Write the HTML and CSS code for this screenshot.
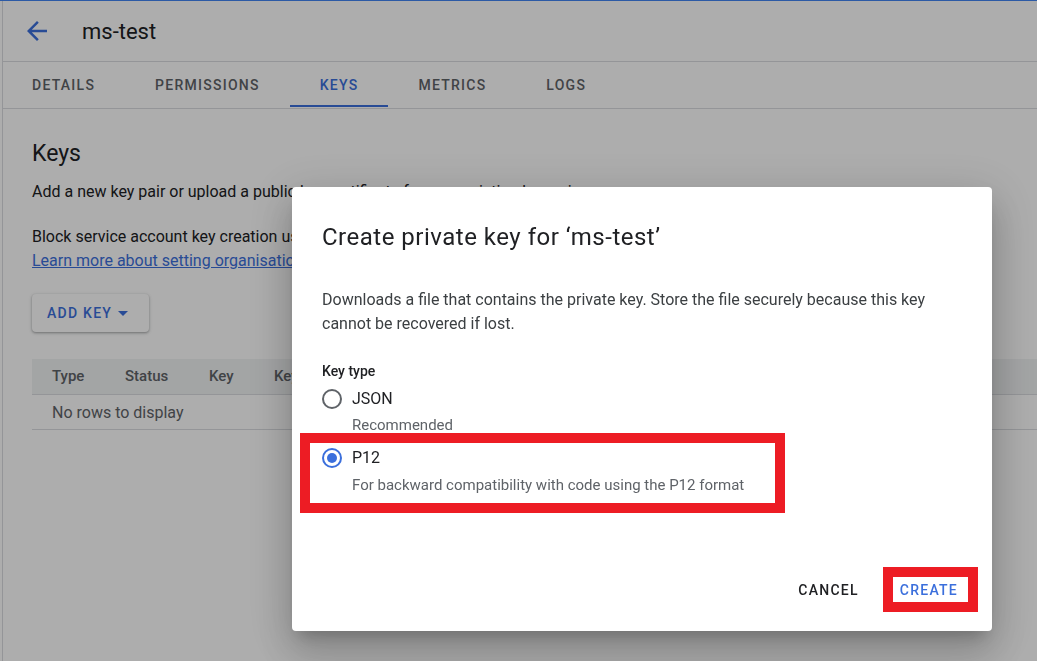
FILE: index.html
```html
<!DOCTYPE html>
<html lang="en">
<head>
    <meta charset="UTF-8">
    <meta name="viewport" content="width=device-width, initial-scale=1.0">
    <title>ms-test - Keys</title>
    <link rel="stylesheet" href="styles.css">
</head>
<body>
    <div class="page">
        <header class="topbar">
            <a class="back" href="#" aria-label="Back">
                <svg viewBox="0 0 24 24" width="30" height="30"><path d="M20 11H7.83l5.59-5.59L12 4l-8 8 8 8 1.41-1.41L7.83 13H20v-2z"/></svg>
            </a>
            <h1>ms-test</h1>
        </header>

        <nav class="tabs">
            <a class="tab" href="#">Details</a>
            <a class="tab" href="#">Permissions</a>
            <a class="tab active" href="#">Keys</a>
            <a class="tab" href="#">Metrics</a>
            <a class="tab" href="#">Logs</a>
        </nav>

        <main class="content">
            <h2>Keys</h2>
            <p class="intro">Add a new key pair or upload a public key certificate from an existing key pair.</p>
            <p class="policy">
                Block service account key creation using organisation policies.<br>
                <a href="#">Learn more about setting organisation policies for service accounts</a>
            </p>

            <button class="add-key">Add key <span class="caret"></span></button>

            <table class="keys-table">
                <colgroup>
                    <col class="col-type">
                    <col class="col-status">
                    <col class="col-key">
                    <col class="col-created">
                    <col>
                </colgroup>
                <thead>
                    <tr>
                        <th>Type</th>
                        <th>Status</th>
                        <th>Key</th>
                        <th>Key creation date</th>
                        <th>Key expiration date</th>
                    </tr>
                </thead>
                <tbody>
                    <tr>
                        <td colspan="5">No rows to display</td>
                    </tr>
                </tbody>
            </table>
        </main>
    </div>

    <div class="scrim">
        <div class="dialog">
            <h3>Create private key for ‘ms-test’</h3>
            <p class="dialog-text">Downloads a file that contains the private key. Store the file securely because this key cannot be recovered if lost.</p>

            <div class="field-label">Key type</div>

            <label class="choice">
                <span class="radio"></span>
                <span class="choice-label">JSON</span>
                <span class="choice-hint">Recommended</span>
            </label>

            <label class="choice checked marked">
                <span class="radio"></span>
                <span class="choice-label">P12</span>
                <span class="choice-hint">For backward compatibility with code using the P12 format</span>
            </label>

            <div class="actions">
                <button class="btn">Cancel</button>
                <button class="btn primary marked">Create</button>
            </div>
        </div>
    </div>
</body>
</html>
```

FILE: styles.css
```css
* {
    box-sizing: border-box;
}

body {
    margin: 0;
    font-family: Roboto, "Noto Sans", Arial, sans-serif;
    font-size: 16px;
    color: #202124;
    background-color: #fff;
    border-top: 1px solid #4285f4;
    overflow: hidden;
}

.page {
    height: 660px;
    margin-left: 2px;
    border-left: 1px solid #dadce0;
}

/* header */
.topbar {
    display: flex;
    align-items: center;
    height: 61px;
    padding-left: 19px;
    border-bottom: 1px solid #dadce0;
}

.back svg {
    display: block;
    fill: #3b6fdc;
}

.topbar h1 {
    margin: 0 0 0 30px;
    font-size: 22px;
    font-weight: 400;
}

/* tabs */
.tabs {
    display: flex;
    height: 47px;
    margin-left: -1px;
    border-bottom: 1px solid #dadce0;
}

.tab {
    position: relative;
    display: flex;
    align-items: center;
    padding: 0 30px;
    color: #5f6368;
    font-size: 14px;
    font-weight: 500;
    letter-spacing: 1.25px;
    text-decoration: none;
    text-transform: uppercase;
}

.tab.active {
    color: #3b6fdc;
}

.tab.active::after {
    content: "";
    position: absolute;
    left: 0;
    right: 0;
    bottom: 1px;
    height: 2px;
    background-color: #3b6fdc;
}

/* page content */
.content {
    padding-left: 29px;
}

.content h2 {
    margin: 31px 0 0;
    font-size: 23px;
    font-weight: 400;
    line-height: 28px;
}

.intro {
    margin: 12px 0 0;
    line-height: 24px;
    white-space: nowrap;
}

.policy {
    margin: 21px 0 0;
    line-height: 24px;
}

.policy a {
    color: #3b6fdc;
}

.add-key {
    display: flex;
    align-items: center;
    height: 38px;
    margin-top: 21px;
    padding: 0 21px 0 15px;
    border: 0;
    border-radius: 4px;
    background-color: #fff;
    box-shadow: 0 1px 2px rgba(60, 64, 67, 0.3), 0 1px 3px 1px rgba(60, 64, 67, 0.15);
    color: #3b6fdc;
    font-family: inherit;
    font-size: 14px;
    font-weight: 500;
    letter-spacing: 1.25px;
    text-transform: uppercase;
}

.caret {
    margin-left: 6px;
    border-left: 5px solid transparent;
    border-right: 5px solid transparent;
    border-top: 5px solid #3b6fdc;
}

.keys-table {
    width: 100%;
    margin-top: 27px;
    border-collapse: collapse;
}

.col-type { width: 93px; }
.col-status { width: 84px; }
.col-key { width: 65px; }
.col-created { width: 230px; }

.keys-table th {
    height: 35px;
    padding: 0;
    background-color: #f1f3f4;
    color: #5f6368;
    font-size: 15px;
    font-weight: 500;
    text-align: left;
    white-space: nowrap;
}

.keys-table th:first-child,
.keys-table td {
    padding-left: 20px;
}

.keys-table tr {
    border-bottom: 1px solid #dadce0;
}

.keys-table td {
    height: 35px;
    padding-top: 2px;
    color: #5f6368;
}

/* dialog */
.scrim {
    position: fixed;
    inset: 0;
    background-color: rgba(0, 0, 0, 0.32);
}

.dialog {
    position: absolute;
    left: 292px;
    top: 187px;
    width: 700px;
    height: 444px;
    display: flex;
    flex-direction: column;
    padding: 36px 14px 19px 30px;
    border-radius: 4px;
    background-color: #fff;
    box-shadow: 0 11px 15px -7px rgba(0, 0, 0, 0.2), 0 24px 38px 3px rgba(0, 0, 0, 0.14), 0 9px 46px 8px rgba(0, 0, 0, 0.12);
}

.dialog h3 {
    margin: 0;
    font-size: 24px;
    font-weight: 400;
    letter-spacing: 0.5px;
    line-height: 28px;
}

.dialog-text {
    max-width: 630px;
    margin: 37px 0 0;
    color: #3c4043;
    line-height: 24px;
}

.field-label {
    margin-top: 25px;
    font-size: 14px;
    font-weight: 500;
    line-height: 20px;
}

.choice {
    display: grid;
    grid-template-columns: 20px auto;
    column-gap: 10px;
    align-items: center;
    margin-top: 6px;
}

.radio {
    width: 20px;
    height: 20px;
    border: 2px solid #5f6368;
    border-radius: 50%;
    display: flex;
    align-items: center;
    justify-content: center;
}

.choice.checked .radio {
    border-color: #3b6fdc;
}

.choice.checked .radio::after {
    content: "";
    width: 10px;
    height: 10px;
    border-radius: 50%;
    background-color: #3b6fdc;
}

.choice-label {
    line-height: 24px;
}

.choice-hint {
    grid-column: 2;
    margin-top: 4px;
    color: #5f6368;
    font-size: 15px;
    line-height: 20px;
}

.choice.marked {
    width: 485px;
    margin: -2px 0 0 -22px;
    padding: 3px 0 8px 12px;
    border: 10px solid #ed1c24;
}

.choice.marked .choice-hint {
    margin-top: 5px;
}

.actions {
    display: flex;
    justify-content: flex-end;
    align-items: center;
    gap: 16px;
    margin-top: auto;
}

.btn {
    height: 36px;
    padding: 0 8px;
    border: 0;
    background: none;
    color: #202124;
    font-family: inherit;
    font-size: 14px;
    font-weight: 500;
    letter-spacing: 1.25px;
    text-transform: uppercase;
}

.btn.primary {
    color: #3b6fdc;
}

.btn.marked {
    height: 45px;
    padding: 0 10px 0 7px;
    border: 10px solid #ed1c24;
}
```
